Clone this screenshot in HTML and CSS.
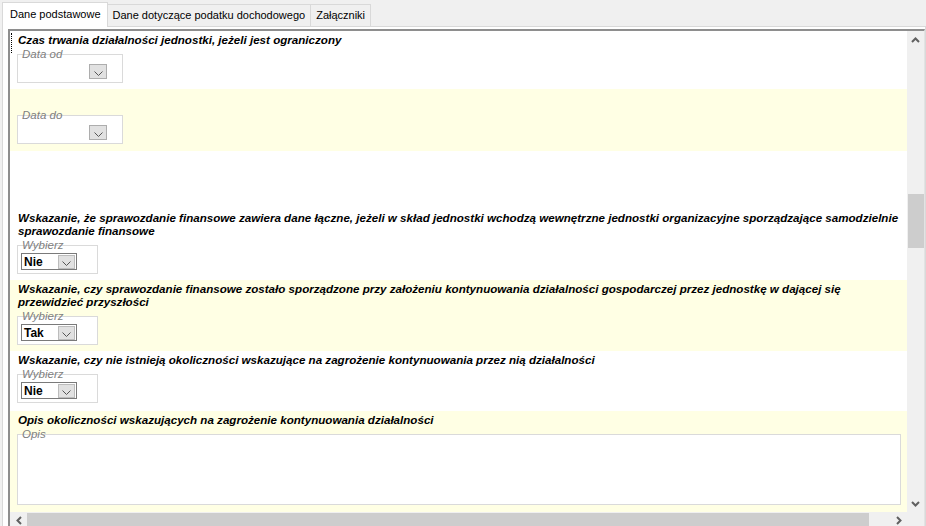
FILE: index.html
```html
<!DOCTYPE html>
<html lang="pl">
<head>
    <meta charset="UTF-8">
    <title>Dane podstawowe</title>
    <link rel="stylesheet" href="styles.css">
</head>
<body>

    <div id="tabs">
        <div class="tab tab-active">Dane podstawowe</div>
        <div class="tab">Dane dotyczące podatku dochodowego</div>
        <div class="tab">Załączniki</div>
    </div>

    <div id="tab-page">
        <div id="panel">
            <div id="content">

                <div class="section section-period">
                    <span class="focus-mark"></span>
                    <div class="title">Czas trwania działalności jednostki, jeżeli jest ograniczony</div>
                    <div class="group group-date">
                        <div class="legend">Data od</div>
                        <div class="date-picker">
                            <span class="drop-btn">
                                <svg width="9" height="5" viewBox="0 0 9 5"><path d="M0.5 0.5 L4.5 4.5 L8.5 0.5" fill="none" stroke="#555" stroke-width="1"/></svg>
                            </span>
                        </div>
                    </div>
                </div>

                <div class="section section-alt section-date-to">
                    <div class="group group-date">
                        <div class="legend">Data do</div>
                        <div class="date-picker">
                            <span class="drop-btn">
                                <svg width="9" height="5" viewBox="0 0 9 5"><path d="M0.5 0.5 L4.5 4.5 L8.5 0.5" fill="none" stroke="#555" stroke-width="1"/></svg>
                            </span>
                        </div>
                    </div>
                </div>

                <div class="section section-joint">
                    <div class="title">Wskazanie, że sprawozdanie finansowe zawiera dane łączne, jeżeli w skład jednostki wchodzą wewnętrzne jednostki organizacyjne sporządzające samodzielnie sprawozdanie finansowe</div>
                    <div class="group group-select">
                        <div class="legend">Wybierz</div>
                        <div class="select">
                            <span class="select-value">Nie</span>
                            <span class="drop-btn">
                                <svg width="9" height="5" viewBox="0 0 9 5"><path d="M0.5 0.5 L4.5 4.5 L8.5 0.5" fill="none" stroke="#555" stroke-width="1"/></svg>
                            </span>
                        </div>
                    </div>
                </div>

                <div class="section section-alt section-going">
                    <div class="title">Wskazanie, czy sprawozdanie finansowe zostało sporządzone przy założeniu kontynuowania działalności gospodarczej przez jednostkę w dającej się przewidzieć przyszłości</div>
                    <div class="group group-select">
                        <div class="legend">Wybierz</div>
                        <div class="select">
                            <span class="select-value">Tak</span>
                            <span class="drop-btn">
                                <svg width="9" height="5" viewBox="0 0 9 5"><path d="M0.5 0.5 L4.5 4.5 L8.5 0.5" fill="none" stroke="#555" stroke-width="1"/></svg>
                            </span>
                        </div>
                    </div>
                </div>

                <div class="section section-threat">
                    <div class="title">Wskazanie, czy nie istnieją okoliczności wskazujące na zagrożenie kontynuowania przez nią działalności</div>
                    <div class="group group-select">
                        <div class="legend">Wybierz</div>
                        <div class="select">
                            <span class="select-value">Nie</span>
                            <span class="drop-btn">
                                <svg width="9" height="5" viewBox="0 0 9 5"><path d="M0.5 0.5 L4.5 4.5 L8.5 0.5" fill="none" stroke="#555" stroke-width="1"/></svg>
                            </span>
                        </div>
                    </div>
                </div>

                <div class="section section-alt section-desc">
                    <div class="title">Opis okoliczności wskazujących na zagrożenie kontynuowania działalności</div>
                    <div class="group group-text">
                        <div class="legend">Opis</div>
                    </div>
                </div>

            </div>

            <div id="vscroll">
                <span class="arrow">
                    <svg width="9" height="6" viewBox="0 0 9 6"><path d="M1 5 L4.5 1.5 L8 5" fill="none" stroke="#606060" stroke-width="2"/></svg>
                </span>
                <div class="track">
                    <div class="thumb thumb-v"></div>
                </div>
                <span class="arrow">
                    <svg width="9" height="6" viewBox="0 0 9 6"><path d="M1 1 L4.5 4.5 L8 1" fill="none" stroke="#606060" stroke-width="2"/></svg>
                </span>
            </div>

            <div id="hscroll">
                <span class="arrow">
                    <svg width="6" height="9" viewBox="0 0 6 9"><path d="M5 1 L1.5 4.5 L5 8" fill="none" stroke="#606060" stroke-width="2"/></svg>
                </span>
                <div class="track track-h">
                    <div class="thumb thumb-h"></div>
                </div>
                <span class="arrow">
                    <svg width="6" height="9" viewBox="0 0 6 9"><path d="M1 1 L4.5 4.5 L1 8" fill="none" stroke="#606060" stroke-width="2"/></svg>
                </span>
            </div>
            <div id="corner"></div>
        </div>
    </div>

</body>
</html>
```

FILE: styles.css
```css
html, body {
    margin: 0;
    height: 100%;
    overflow: hidden;
}
body {
    background: #f0f0f0;
    font-family: "Liberation Sans", Arial, sans-serif;
    font-size: 11px;
    color: #000;
}
#tabs {
    display: flex;
    align-items: flex-end;
    height: 24px;
    padding: 2px 0 0 2px;
}
.tab {
    height: 22px;
    line-height: 20px;
    padding: 0 5px;
    border: 1px solid #d9d9d9;
    border-bottom: none;
    margin-left: -1px;
    background: #f0f0f0;
    box-sizing: border-box;
}
.tab-active {
    height: 25px;
    line-height: 22px;
    padding: 0 6px 0 7px;
    margin-left: 0;
    background: #fff;
    position: relative;
    z-index: 1;
    margin-bottom: -1px;
}
#tab-page {
    margin-left: 2px;
    background: #fff;
    border: 1px solid #d9d9d9;
    padding: 2px 0 0 5px;
}
#panel {
    display: grid;
    grid-template-columns: 1fr 17px;
    grid-template-rows: 481px 17px;
    border-top: 2px solid #8e8e8e;
    border-left: 2px solid #8e8e8e;
    border-right: 1px solid #e3e3e3;
}
#content {
    overflow: hidden;
    background: #fff;
}
.section {
    position: relative;
    padding: 2px 0 0 7px;
    box-sizing: border-box;
}
.section-alt {
    background: #ffffe4;
}
.section-period {
    height: 58px;
}
.section-date-to {
    height: 62px;
    padding-top: 26px;
}
.section-joint {
    height: 129px;
    padding-top: 60px;
}
.section-going {
    height: 71px;
}
.section-threat {
    height: 60px;
}
.section-desc {
    height: 101px;
}
.focus-mark {
    position: absolute;
    left: 1px;
    top: 2px;
    height: 20px;
    border-left: 1px dotted #000;
}
.title {
    font-weight: bold;
    font-style: italic;
    font-size: 11.6px;
    line-height: 13px;
    padding-left: 1px;
    padding-right: 8px;
    margin-bottom: 8px;
}
.group {
    border: 1px solid #dadada;
    box-sizing: border-box;
    background: #fff;
}
.legend {
    font-style: italic;
    font-size: 11.5px;
    color: #808080;
    line-height: 14px;
    margin: -8px 0 0 4px;
}
.group-date {
    width: 106px;
    height: 29px;
}
.date-picker {
    display: flex;
    justify-content: flex-end;
    width: 89px;
    margin-top: 3px;
}
.drop-btn {
    display: flex;
    align-items: center;
    justify-content: center;
    width: 16px;
    height: 13px;
    background: #e1e1e1;
    border: 1px solid #adadad;
}
.drop-btn svg {
    margin-top: 3px;
}
.group-select {
    width: 81px;
    height: 29px;
}
.select {
    display: flex;
    align-items: center;
    justify-content: space-between;
    width: 56px;
    height: 17px;
    margin: 1px 0 0 3px;
    border: 1px solid #7a7a7a;
    box-sizing: border-box;
    padding-right: 1px;
    background: #fff;
    font-size: 12px;
}
.select-value {
    font-weight: bold;
    padding-left: 2px;
}
.select .drop-btn {
    width: 15px;
    height: 12px;
    border-color: #bcbcbc;
}
.group-text {
    width: 884px;
    height: 71px;
    margin-top: 2px;
}
#vscroll {
    display: flex;
    flex-direction: column;
    background: #f0f0f0;
}
#vscroll .arrow {
    display: flex;
    align-items: center;
    justify-content: center;
    height: 17px;
}
.track {
    flex: 1;
    padding-top: 146px;
}
.thumb-v {
    height: 54px;
    margin-left: 1px;
    background: #cdcdcd;
}
#hscroll {
    display: flex;
    background: #f0f0f0;
}
#hscroll .arrow {
    display: flex;
    align-items: center;
    justify-content: center;
    width: 17px;
}
.track-h {
    padding: 1px 0 0 0;
}
.thumb-h {
    width: 842px;
    height: 15px;
    background: #cdcdcd;
}
#corner {
    background: #f0f0f0;
}
```
